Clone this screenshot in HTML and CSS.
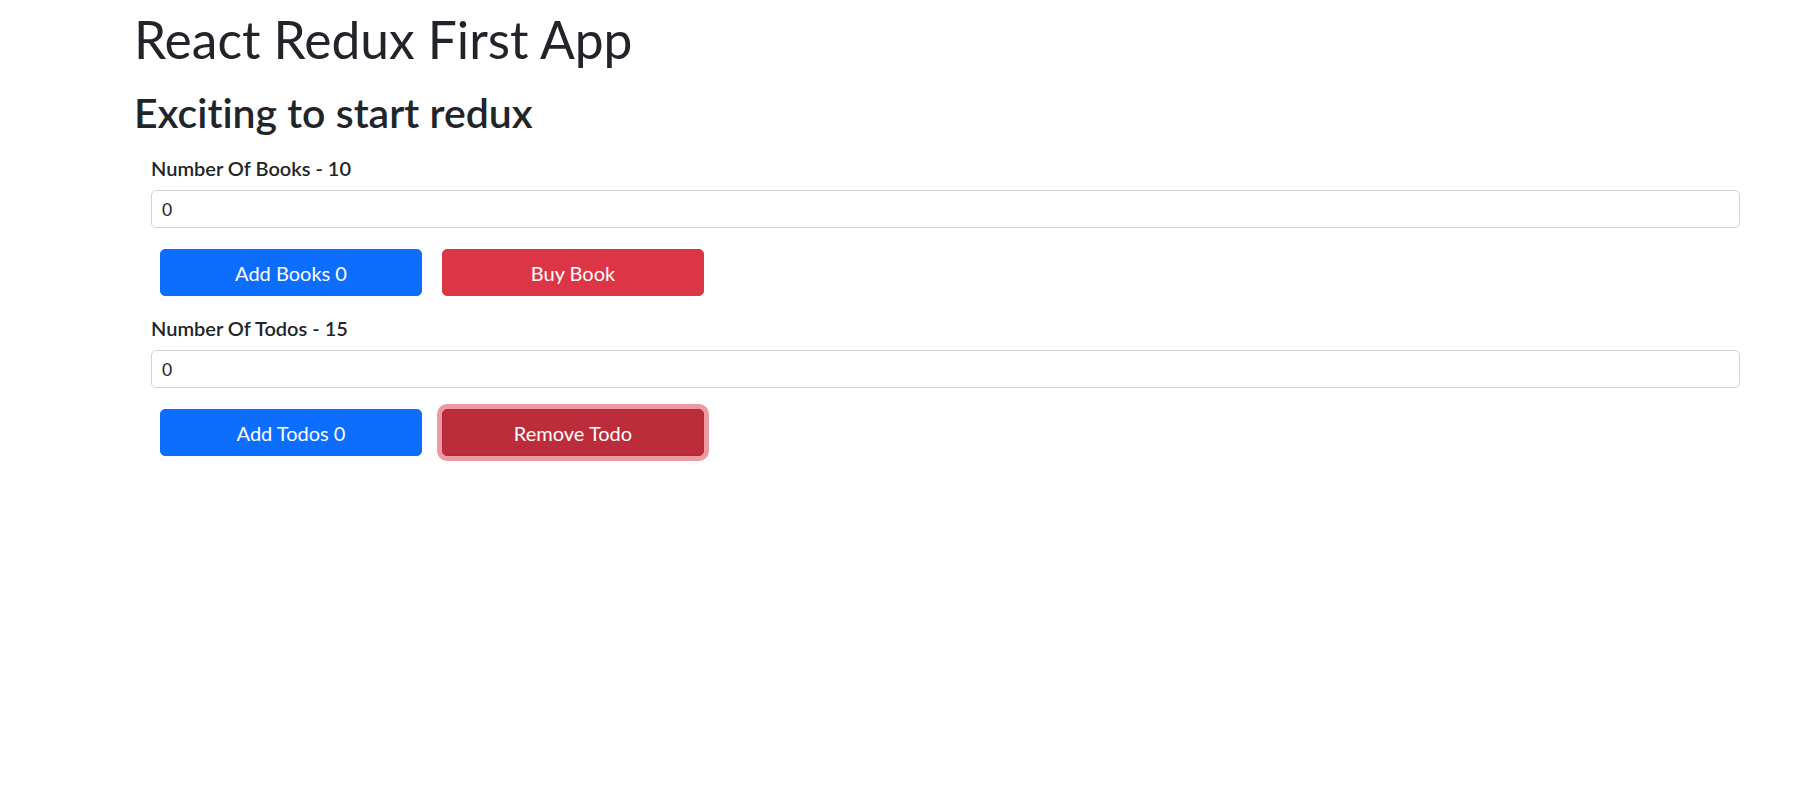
FILE: index.html
```html
<!DOCTYPE html>
<html lang="en">
<head>
<meta charset="utf-8">
<title>React Redux First App</title>
<link rel="stylesheet" href="styles.css">
</head>
<body>
<div class="app">
  <h1 class="title">React Redux First App</h1>
  <h2 class="subtitle">Exciting to start redux</h2>
  <div class="panel">
    <section class="counter">
      <label class="counter-label" for="books">Number Of Books - 10</label>
      <input class="counter-input" id="books" type="text" value="0">
      <div class="actions">
        <button class="btn btn-primary" type="button">Add Books 0</button>
        <button class="btn btn-danger" type="button">Buy Book</button>
      </div>
    </section>
    <section class="counter">
      <label class="counter-label" for="todos">Number Of Todos - 15</label>
      <input class="counter-input" id="todos" type="text" value="0">
      <div class="actions">
        <button class="btn btn-primary" type="button">Add Todos 0</button>
        <button class="btn btn-danger is-focused" type="button">Remove Todo</button>
      </div>
    </section>
  </div>
</div>
</body>
</html>
```

FILE: styles.css
```css
* { box-sizing: border-box; }
body {
  margin: 0;
  font-family: Lato, "Open Sans", sans-serif;
  font-variant-ligatures: no-common-ligatures;
  color: #212529;
  background: #fff;
}
.app {
  padding: 9px 0 0 134px;
}
.title {
  margin: 0;
  font-size: 51.5px;
  font-weight: 400;
  line-height: 1.2;
}
.subtitle {
  margin: 17px 0 0;
  font-size: 41px;
  font-weight: 600;
  line-height: 1.2;
}
.panel {
  margin: 16.5px 78px 0 17px;
}
.counter {
  display: flex;
  flex-direction: column;
  margin-bottom: 17px;
}
.counter-label {
  font-size: 20px;
  font-weight: 600;
  line-height: 30px;
}
.counter-input {
  margin-top: 7px;
  height: 38px;
  padding: 0 10px;
  font: inherit;
  font-size: 17.5px;
  color: #212529;
  background: #fff;
  border: 1px solid #ced4da;
  border-radius: 5px;
  outline: none;
}
.actions {
  display: flex;
  gap: 20px;
  margin-top: 21px;
  padding-left: 9px;
}
.btn {
  width: 262px;
  height: 47px;
  padding: 0;
  font: inherit;
  font-size: 20px;
  color: #fff;
  border: 1px solid transparent;
  border-radius: 5px;
}
.btn-primary {
  background: #0d6efd;
  border-color: #0d6efd;
}
.btn-danger {
  background: #dc3545;
  border-color: #dc3545;
}
.btn-danger.is-focused {
  background: #bb2d3b;
  border-color: #b02a37;
  box-shadow: 0 0 0 5px rgba(220, 53, 69, 0.5);
}
```
